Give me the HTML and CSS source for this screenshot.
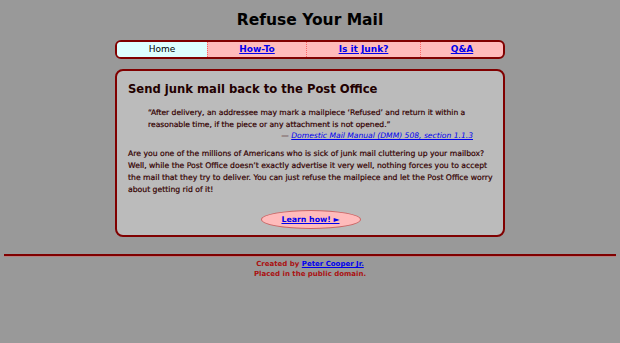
FILE: index.html
```html
<!DOCTYPE html>
<html>
<head>
<meta charset="utf-8">
<title>Refuse Your Mail</title>
<link rel="stylesheet" href="styles.css">
</head>
<body>
<div class="wrap">
  <h1 class="title">Refuse Your Mail</h1>
  <nav class="nav">
    <span class="nav-item current">Home</span>
    <a class="nav-item" href="#">How-To</a>
    <a class="nav-item" href="#">Is it Junk?</a>
    <a class="nav-item" href="#">Q&amp;A</a>
  </nav>
  <div class="box">
    <h2 class="heading">Send junk mail back to the Post Office</h2>
    <blockquote class="quote">
      <p class="quote-text">“After delivery, an addressee may mark a mailpiece ‘Refused’ and return it within a reasonable time, if the piece or any attachment is not opened.”</p>
      <p class="cite">— <a href="#">Domestic Mail Manual (DMM) 508, section 1.1.3</a></p>
    </blockquote>
    <p class="text">Are you one of the millions of Americans who is sick of junk mail cluttering up your mailbox? Well, while the Post Office doesn’t exactly advertise it very well, nothing forces you to accept the mail that they try to deliver. You can just refuse the mailpiece and let the Post Office worry about getting rid of it!</p>
    <div class="action"><a class="button" href="#">Learn how! ►</a></div>
  </div>
</div>
<hr class="rule">
<footer class="footer">
  <div>Created by <a href="#">Peter Cooper Jr.</a></div>
  <div>Placed in the public domain.</div>
</footer>
</body>
</html>
```
FILE: styles.css
```css
html, body {
  margin: 0;
  padding: 0;
  background: #999999;
  font-family: "DejaVu Sans", Verdana, sans-serif;
  color: #330000;
}
a { color: #0000ee; }
.wrap {
  width: 390px;
  margin: 0 auto;
  padding-top: 10px;
}
.title {
  margin: 0;
  text-align: center;
  font-size: 15.5px;
  line-height: 20px;
  color: #000;
}
.nav {
  margin-top: 10px;
  display: grid;
  grid-template-columns: 90px 99px 114px 1fr;
  border: 2px solid #800000;
  border-radius: 6px;
  overflow: hidden;
  background: #ffbbbb;
  height: 15px;
}
.nav-item {
  text-align: center;
  font-size: 9px;
  line-height: 15px;
  font-weight: bold;
  border-left: 1px dotted #ff6666;
}
.nav-item.current {
  background: #ddffff;
  color: #000;
  font-weight: normal;
  border-left: none;
}
.box {
  margin-top: 10px;
  border: 2px solid #800000;
  border-radius: 8px;
  background: #bbbbbb;
  padding: 10px 8px 8px 11px;
  height: 146px;
}
.heading {
  margin: 0;
  font-size: 11.6px;
  line-height: 16px;
  color: #220000;
}
.quote {
  margin: 10px 22px 0 20px;
  font-size: 7.6px;
  line-height: 11.5px;
}
.quote p { margin: 0; }
.cite {
  text-align: right;
  font-style: italic;
}
.text {
  margin: 6px 0 0;
  font-size: 7.7px;
  line-height: 12px;
}
.text, .quote-text {
  -webkit-text-stroke: 0.2px #330000;
}
.action {
  margin-top: 11px;
  text-align: center;
  padding-right: 2px;
}
.button {
  display: inline-block;
  width: 98px;
  height: 17px;
  line-height: 17px;
  border: 1px solid #cc6666;
  border-radius: 50%;
  background: #ffbbbb;
  font-size: 7.8px;
  font-weight: bold;
}
.rule {
  margin: 17px 4px 0;
  border: none;
  border-top: 2px solid #800000;
  border-bottom: 1px solid #b58080;
  height: 0;
}
.footer {
  text-align: center;
  font-size: 7px;
  line-height: 10px;
  color: #aa1111;
  font-weight: bold;
  padding-top: 2px;
}
```
